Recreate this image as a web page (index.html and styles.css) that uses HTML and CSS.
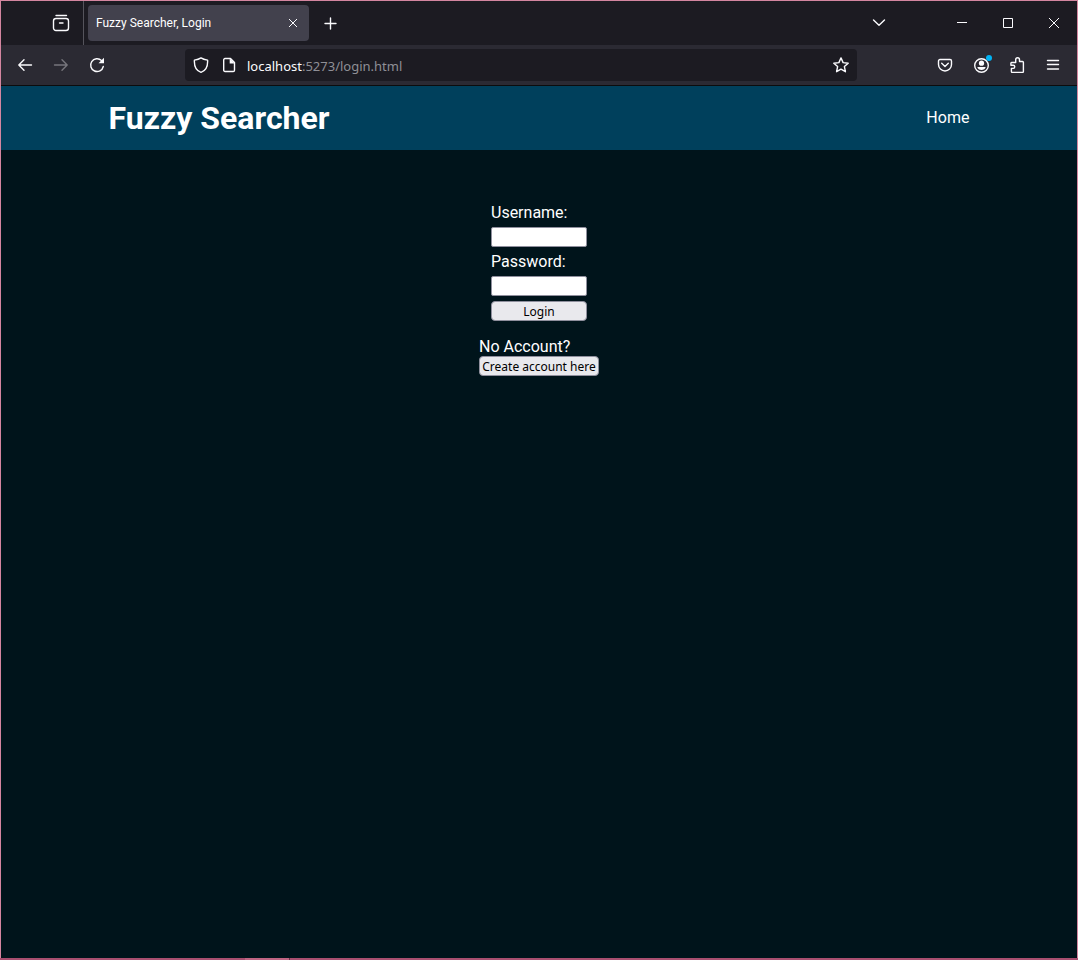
FILE: index.html
```html
<!DOCTYPE html>
<html lang="en">
<head>
<meta charset="utf-8">
<title>Fuzzy Searcher, Login</title>
<link rel="stylesheet" href="styles.css">
</head>
<body>
<div class="window">
  <div class="tabbar">
    <button class="icon-btn view-btn" aria-label="Firefox View">
      <svg class="icon-lg" viewBox="0 0 18 18"><path d="M4 1.500h10.500"/><rect x="1.500" y="4.500" width="15" height="12" rx="2.500"/><path d="M7.500 9h3.500"/></svg>
    </button>
    <div class="tab">
      <span class="tab-title">Fuzzy Searcher, Login</span>
      <button class="icon-btn tab-close" aria-label="Close tab">
        <svg class="icon thin" viewBox="0 0 16 16"><path d="M4 4l8 8M12 4l-8 8"/></svg>
      </button>
    </div>
    <button class="icon-btn new-tab" aria-label="New tab">
      <svg class="icon" viewBox="0 0 16 16"><path d="M8.500 3v11M3 8.500h11"/></svg>
    </button>
    <button class="icon-btn all-tabs" aria-label="List all tabs">
      <svg class="icon" viewBox="0 0 16 16"><path d="M2.500 5L8 10.200 13.500 5"/></svg>
    </button>
    <div class="controls">
      <button class="icon-btn control" aria-label="Minimize"><svg class="icon thin" viewBox="0 0 16 16"><path d="M3 7.500h10"/></svg></button>
      <button class="icon-btn control" aria-label="Maximize"><svg class="icon thin" viewBox="0 0 16 16"><path d="M3.500 3.500h9v9h-9z"/></svg></button>
      <button class="icon-btn control" aria-label="Close"><svg class="icon thin" viewBox="0 0 16 16"><path d="M3 3l10 10M13 3L3 13"/></svg></button>
    </div>
  </div>

  <div class="toolbar">
    <div class="nav-buttons">
      <button class="icon-btn tool" aria-label="Back"><svg class="icon" viewBox="0 0 16 16"><path d="M14.500 8H1.800M7 2.800L1.800 8 7 13.200"/></svg></button>
      <button class="icon-btn tool dim" aria-label="Forward" disabled><svg class="icon" viewBox="0 0 16 16"><path d="M1.500 8h12.700M9 2.800L14.200 8 9 13.200"/></svg></button>
      <button class="icon-btn tool" aria-label="Reload"><svg class="icon" viewBox="0 0 16 16"><path d="M14.300 9.500a6.400 6.400 0 1 1-1.800-6L14 5"/><path class="solid" d="M15 .8v5.500H9.500z"/></svg></button>
    </div>
    <div class="urlbar">
      <svg class="icon" viewBox="0 0 16 16"><path d="M8 .900C6 2.300 3.800 2.800 1.400 3.100 1.100 8.500 2.500 13.500 8 15.300c5.500-1.800 6.900-6.800 6.600-12.200C12.200 2.800 10 2.300 8 .900z"/></svg>
      <svg class="icon page" viewBox="0 0 16 16"><path d="M4 1.500h5.500l4 4v7.700a1.300 1.300 0 0 1-1.300 1.300H4a1.300 1.300 0 0 1-1.300-1.300V2.800A1.300 1.300 0 0 1 4 1.500z"/><path class="solid" d="M8.700 1.200v5.200h5.200z"/></svg>
      <span class="url"><b class="host">localhost</b>:5273/login.html</span>
      <button class="icon-btn star" aria-label="Bookmark this page"><svg class="icon" viewBox="0 0 16 16"><path d="M8 .900l2.100 4.700 5.100.6-3.800 3.400 1 5.100L8 12.200l-4.400 2.500 1-5.100L.8 6.200l5.100-.6z"/></svg></button>
    </div>
    <div class="actions">
      <button class="icon-btn tool" aria-label="Save to Pocket"><svg class="icon" viewBox="0 0 16 16"><path d="M3 2.500h10a1.500 1.500 0 0 1 1.500 1.500v3.500a6.500 6.500 0 0 1-13 0V4A1.500 1.500 0 0 1 3 2.500z"/><path d="M4.700 6.300L8 9.500l3.300-3.200"/></svg></button>
      <button class="icon-btn tool account" aria-label="Account"><svg class="icon" viewBox="0 0 16 16"><circle cx="8.500" cy="8.500" r="6.800"/><circle class="solid" cx="8.500" cy="6.200" r="2.600"/><path class="solid" d="M4.300 9.900h8.400c-.3 2-2.200 3-4.200 3s-3.900-1-4.200-3z"/></svg><span class="dot"></span></button>
      <button class="icon-btn tool" aria-label="Extensions"><svg class="icon" viewBox="0 0 16 16"><path d="M2.500 5.500H6.700V2.700a1.900 1.900 0 0 1 3.800 0v1.800h3a.9.9 0 0 1 .9.9v9.100a.9.9 0 0 1-.9.9H3.300a.9.9 0 0 1-.9-.9v-3.100h1.800a1.500 1.500 0 0 0 0-3.100H1.900V6.100a.6.6 0 0 1 .6-.6z"/></svg></button>
      <button class="icon-btn tool" aria-label="Menu"><svg class="icon" viewBox="0 0 16 16"><path d="M2.500 3.500h11M2.500 7.500h11M2.500 12h11"/></svg></button>
    </div>
  </div>

  <header class="site-header">
    <h1 class="brand">Fuzzy Searcher</h1>
    <nav><a class="nav-link" href="#">Home</a></nav>
  </header>

  <main class="content">
    <form class="login">
      <label for="username">Username:</label>
      <input class="field" id="username" type="text">
      <label for="password">Password:</label>
      <input class="field" id="password" type="password">
      <button class="btn" type="button">Login</button>
    </form>
    <div class="signup">
      <span>No Account?</span>
      <button class="btn" type="button">Create account here</button>
    </div>
  </main>
  <div class="edge"><span class="edge-mark"></span></div>
</div>
</body>
</html>
```
FILE: styles.css
```css
* {
  box-sizing: border-box;
}

body {
  margin: 0;
  background: #00141b;
}

.window {
  display: flex;
  flex-direction: column;
  min-height: 100vh;
  border: 1px solid #d486a0;
  border-bottom: 0;
  background: #00141b;
  color: #fff;
  font-family: Roboto, sans-serif;
  font-size: 16px;
  line-height: 19px;
}

.icon-btn {
  display: flex;
  align-items: center;
  justify-content: center;
  padding: 0;
  border: 0;
  background: none;
  color: #fbfbfe;
}

.icon,
.icon-lg {
  display: block;
  flex: none;
  width: 16px;
  height: 16px;
  fill: none;
  stroke: currentColor;
  stroke-width: 1.4;
  stroke-linecap: round;
  stroke-linejoin: round;
}

.icon-lg {
  width: 18px;
  height: 18px;
}

.thin {
  stroke-width: 1;
  stroke-linecap: butt;
  stroke-linejoin: miter;
}

.solid {
  fill: currentColor;
  stroke: none;
}

/* Tab strip */
.tabbar {
  display: flex;
  align-items: center;
  height: 44px;
  background: #1c1b22;
}

.view-btn {
  width: 83px;
  height: 44px;
  padding-left: 37px;
  border-right: 1px solid #55545c;
}

.tab {
  display: flex;
  align-items: center;
  justify-content: space-between;
  width: 221px;
  height: 36px;
  margin-left: 4px;
  padding: 0 8px;
  border-radius: 4px;
  background: #42414d;
  font-size: 12px;
}

.new-tab {
  margin-left: 13px;
}

.all-tabs {
  margin-left: auto;
  margin-right: 52px;
}

.controls {
  display: flex;
}

.control {
  width: 46px;
  height: 44px;
}

/* Navigation toolbar */
.toolbar {
  display: flex;
  align-items: center;
  height: 41px;
  border-bottom: 1px solid #0c0c0d;
  background: #2b2a33;
}

.nav-buttons,
.actions {
  display: flex;
}

.nav-buttons {
  padding-left: 6px;
}

.tool {
  position: relative;
  width: 36px;
  height: 32px;
}

.dim {
  color: #77767d;
}

.urlbar {
  display: flex;
  flex: 1;
  align-items: center;
  height: 32px;
  margin-left: 70px;
  padding: 0 8px;
  border-radius: 4px;
  background: #1c1b22;
  color: #fbfbfe;
}

.page {
  margin-left: 12px;
}

.url {
  margin-left: 10px;
  padding-top: 2px;
  color: #8f8f96;
  font-family: "Noto Sans", sans-serif;
  font-size: 13px;
}

.host {
  color: #fbfbfe;
  font-weight: 400;
}

.star {
  margin-left: auto;
}

.actions {
  margin-left: 70px;
  padding-right: 6px;
}

.dot {
  position: absolute;
  top: 6px;
  right: 7px;
  width: 6px;
  height: 6px;
  border-radius: 50%;
  background: #00b3f4;
}

/* Page */
.site-header {
  display: flex;
  align-items: center;
  justify-content: space-between;
  height: 64px;
  padding: 0 10%;
  background: #00405c;
}

.brand {
  margin: 0;
  font-size: 32px;
  line-height: 38px;
  font-weight: 700;
}

.nav-link {
  display: block;
  padding-bottom: 1px;
  color: #fff;
  text-decoration: none;
}

.content {
  display: flex;
  flex: 1;
  flex-direction: column;
  align-items: center;
  gap: 16px;
  padding-top: 53px;
}

.login {
  display: flex;
  flex-direction: column;
  gap: 5px;
  width: 96px;
}

.signup {
  display: flex;
  flex-direction: column;
  width: 120px;
}

.field,
.btn {
  width: 100%;
  height: 20px;
  padding: 0;
  border: 1px solid #8f8f9d;
  border-radius: 2px;
  background: #fff;
  color: #000;
}

.btn {
  padding-top: 1px;
  border-radius: 4px;
  background: #e9e9ed;
  font-family: "Noto Sans", sans-serif;
  font-size: 12px;
  line-height: 16px;
  white-space: nowrap;
}

/* Bottom window edge */
.edge {
  height: 2px;
  margin: 0 -1px;
  padding-left: 245px;
  background: #a84f70;
}

.edge-mark {
  display: block;
  width: 45px;
  height: 2px;
  border-right: 1px solid #6b3048;
  background: #bf6583;
}
```
